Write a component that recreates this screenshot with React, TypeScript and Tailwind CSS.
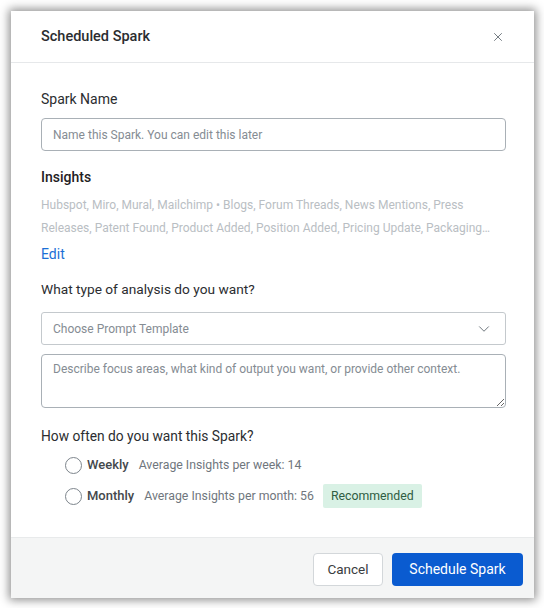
import { X, ChevronDown } from "lucide-react";

const INSIGHTS =
  "Hubspot, Miro, Mural, Mailchimp • Blogs, Forum Threads, News Mentions, Press Releases, Patent Found, Product Added, Position Added, Pricing Update, Packaging Change, Leadership Change";

function Radio({ label, hint, badge }: { label: string; hint: string; badge?: string }) {
  return (
    <div className="flex items-center h-[24px]">
      <span className="w-[17px] h-[17px] rounded-full border-[1.5px] border-[#7d858c] bg-white shrink-0" />
      <span className="ml-[5px] text-[13px] font-medium text-[#44484c]">{label}</span>
      <span className="ml-[10px] text-[12.3px] text-[#6f767d]">{hint}</span>
      {badge && (
        <span className="ml-[9px] h-[24px] px-[8px] flex items-center rounded-[2px] bg-[#d9f1e5] text-[12.3px] text-[#2f5d43]">
          {badge}
        </span>
      )}
    </div>
  );
}

export default function App() {
  return (
    <div
      className="w-[544px] h-[608px] bg-white pt-[11px] pl-[11px]"
      style={{ fontFamily: "Roboto, 'Liberation Sans', sans-serif" }}
    >
      <div className="w-[523px] h-[587px] bg-white flex flex-col shadow-[0_0_9px_2px_rgba(0,0,0,0.45)]">
        {/* header */}
        <div className="h-[52px] flex items-center justify-between pl-[30px] pr-[29px] border-b border-[#e6e8ea]">
          <span className="text-[14.5px] font-medium text-[#2b2d30]">Scheduled Spark</span>
          <X size={14} strokeWidth={1.6} className="text-[#6b737a]" />
        </div>

        {/* body */}
        <div className="flex-1 px-[30px] pt-[26px]">
          <div className="text-[14px] leading-[20px] text-[#2b2d30]">Spark Name</div>
          <div className="mt-[9px] h-[33px] w-[465px] rounded-[4px] border border-[#a9b0b6] flex items-center px-[11px] text-[12px] text-[#858c93]">
            Name this Spark. You can edit this later
          </div>

          <div className="mt-[16px] text-[14px] font-medium leading-[20px] text-[#1f2124]">Insights</div>
          <div className="mt-[7px] w-[465px] text-[12px] leading-[23px] text-[#b9bec3] line-clamp-2">
            {INSIGHTS}
          </div>
          <div className="mt-[4px] text-[14px] leading-[20px] text-[#1b6fd6]">Edit</div>

          <div className="mt-[15px] text-[13.7px] leading-[20px] text-[#2b2d30]">
            What type of analysis do you want?
          </div>
          <div className="mt-[13px] h-[33px] w-[465px] rounded-[3px] border border-[#c4c9cd] flex items-center justify-between pl-[11px] pr-[12px] text-[12px] text-[#858c93]">
            <span>Choose Prompt Template</span>
            <ChevronDown size={18} strokeWidth={1.3} className="text-[#6b737a]" />
          </div>
          <textarea
            readOnly
            placeholder="Describe focus areas, what kind of output you want, or provide other context."
            className="mt-[9px] block h-[54px] w-[465px] rounded-[4px] border border-[#a9b0b6] px-[11px] pt-[5px] text-[12px] leading-[18px] placeholder:text-[#858c93] outline-none"
          />

          <div className="mt-[18px] text-[13.8px] leading-[20px] text-[#2b2d30]">
            How often do you want this Spark?
          </div>
          <div className="mt-[7px] pl-[24px] flex flex-col gap-[7px]">
            <Radio label="Weekly" hint="Average Insights per week: 14" />
            <Radio label="Monthly" hint="Average Insights per month: 56" badge="Recommended" />
          </div>
        </div>

        {/* footer */}
        <div className="h-[61px] bg-[#f4f5f5] border-t border-[#e8eaeb] flex justify-end items-start pt-[15px] pr-[11px] gap-[9px]">
          <button className="h-[33px] w-[70px] rounded-[4px] border border-[#d3d7da] bg-white text-[13.5px] text-[#3a3d40]">
            Cancel
          </button>
          <button className="h-[33px] w-[131px] rounded-[4px] bg-[#0a5bd0] text-[14px] text-white">
            Schedule Spark
          </button>
        </div>
      </div>
    </div>
  );
}
